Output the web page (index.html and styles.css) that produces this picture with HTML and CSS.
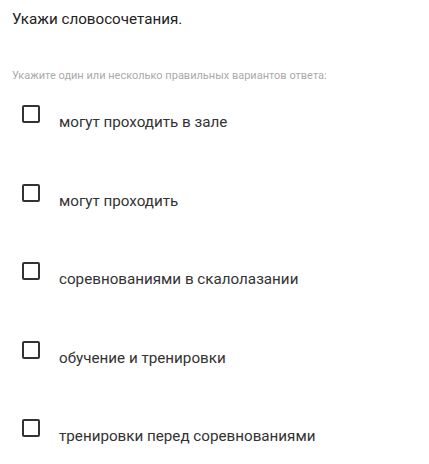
FILE: index.html
```html
<!DOCTYPE html>
<html lang="ru">
<head>
<meta charset="utf-8">
<link rel="stylesheet" href="styles.css">
</head>
<body>
<div class="quiz">
  <div class="question">Укажи словосочетания.</div>
  <div class="hint">Укажите один или несколько правильных вариантов ответа:</div>
  <ul class="options">
    <li class="option"><span class="box"></span><span class="label">могут проходить в зале</span></li>
    <li class="option"><span class="box"></span><span class="label">могут проходить</span></li>
    <li class="option"><span class="box"></span><span class="label">соревнованиями в скалолазании</span></li>
    <li class="option"><span class="box"></span><span class="label">обучение и тренировки</span></li>
    <li class="option"><span class="box"></span><span class="label">тренировки перед соревнованиями</span></li>
  </ul>
</div>
</body>
</html>
```

FILE: styles.css
```css
html, body {
  margin: 0;
  padding: 0;
  background: #fff;
}
body {
  font-family: Roboto, "Noto Sans", sans-serif;
  color: #333;
}
.quiz {
  padding: 9px 12px 10px 12px;
}
.question {
  font-size: 15.2px;
  line-height: 20px;
  color: #222;
}
.hint {
  margin-top: 40px;
  font-size: 11px;
  line-height: 14px;
  color: #aaa;
}
.options {
  list-style: none;
  margin: 22px 0 0 0;
  padding: 0;
  display: flex;
  flex-direction: column;
  gap: 51.5px;
}
.option {
  display: flex;
  align-items: flex-start;
}
.box {
  flex: none;
  width: 14px;
  height: 14px;
  border: 2px solid #333;
  border-radius: 2px;
  margin-left: 10px;
}
.label {
  margin-left: 19px;
  margin-top: 7px;
  font-size: 15.2px;
  line-height: 20px;
  color: #333;
}
```
